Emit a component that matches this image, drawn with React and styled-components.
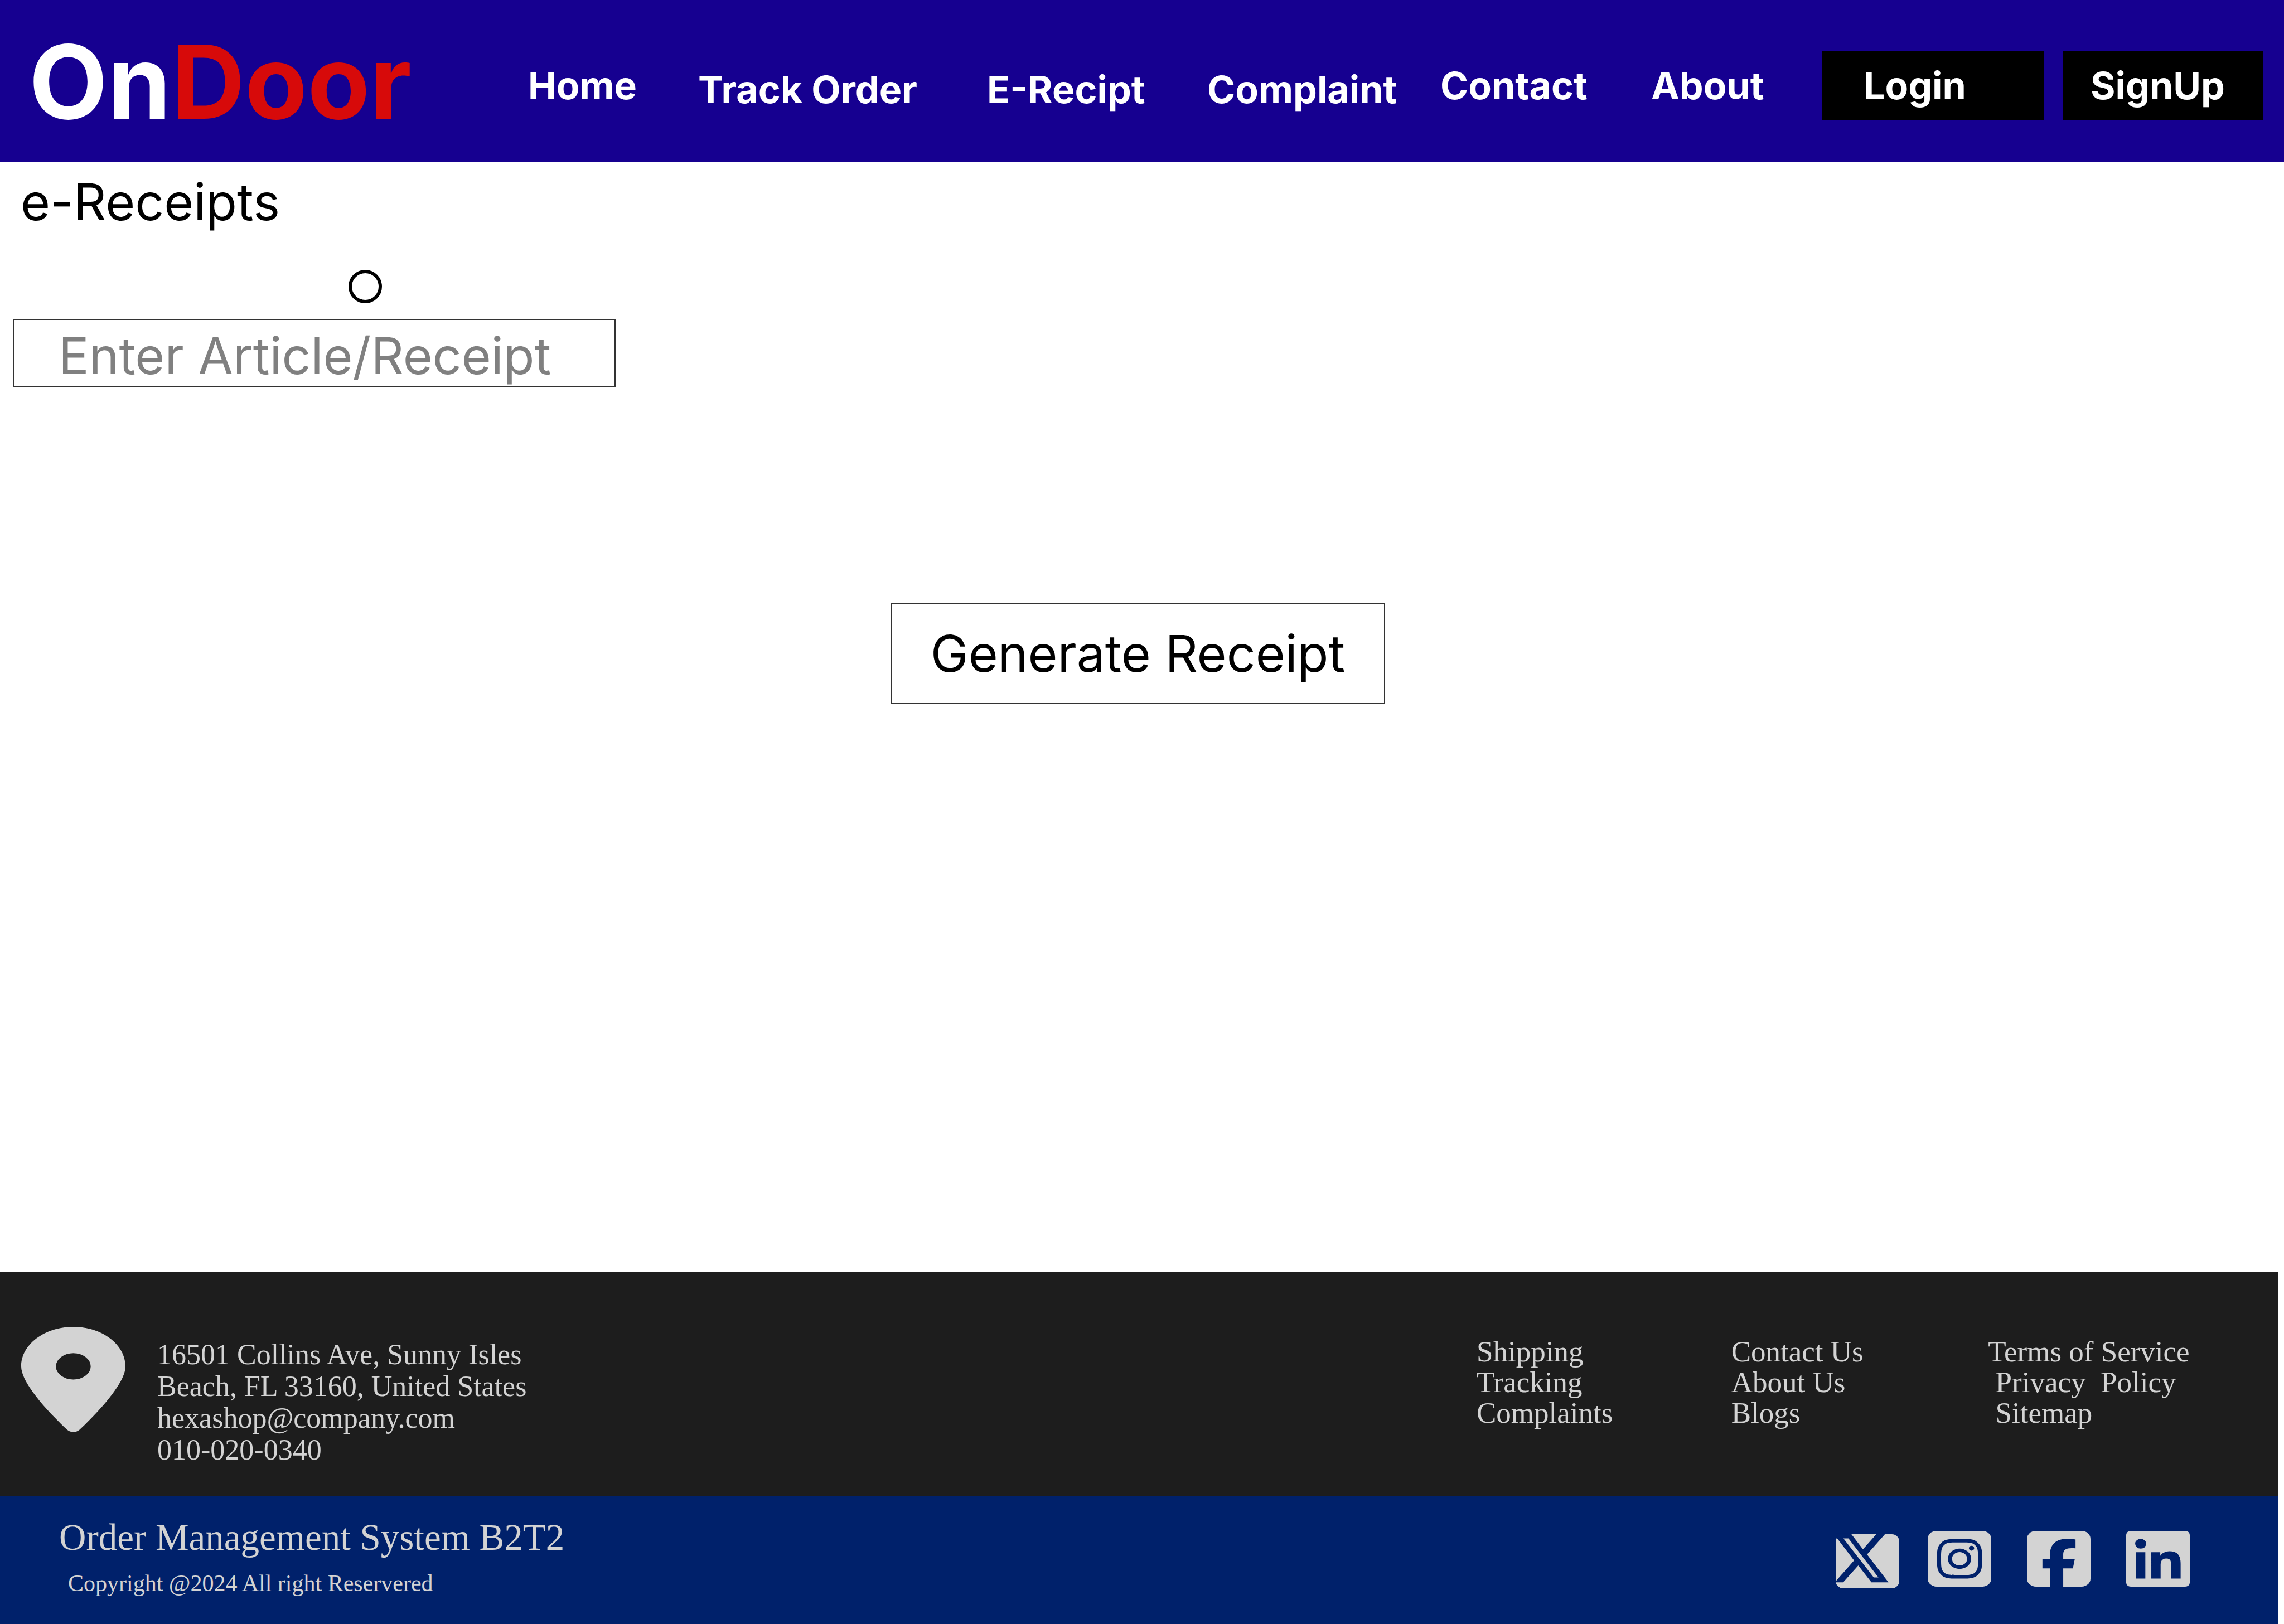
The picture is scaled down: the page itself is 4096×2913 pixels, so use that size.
import React from "react";
import styled, { createGlobalStyle } from "styled-components";

const color = {
  header: "#160090",
  red: "#d70a0a",
  footer: "#1d1d1d",
  bar: "#00216b",
  line: "#4e5468",
  soft: "#d3d3d3",
  outline: "#333",
};

const GlobalStyle = createGlobalStyle`
  *, *::before, *::after { box-sizing: border-box; }
  body { margin: 0; background: #fff; font-family: Inter, "Liberation Sans", sans-serif; }
  h1, p, ul { margin: 0; padding: 0; }
  h1 { font-weight: 400; }
  ul { list-style: none; }
  a { color: inherit; text-decoration: none; }
  button, input { font: inherit; border-radius: 0; }
`;

const Page = styled.div`
  display: flex;
  flex-direction: column;
  min-height: 100vh;
`;

/* Header */

const Header = styled.header`
  display: grid;
  grid-template-columns: 895fr 2321fr 791fr;
  align-items: center;
  min-height: 290px;
  padding: 16px 37px 0 52px;
  background: ${color.header};
  color: #fff;
  font-weight: 700;
  font-size: 68px;
  line-height: 82px;
`;

const Logo = styled.a`
  padding-bottom: 13px;
  font-size: 183px;
  line-height: 221px;
`;

const LogoAccent = styled.span`
  color: ${color.red};
`;

const NavList = styled.ul`
  display: grid;
  grid-template-columns: 305fr 518fr 395fr 418fr 378fr 307fr;
  align-items: center;
  white-space: nowrap;
`;

const NavItem = styled.li`
  padding-top: ${(p) => (p.$low ? "14px" : "0")};
`;

const Actions = styled.div`
  display: grid;
  grid-template-columns: 398fr 359fr;
  gap: 34px;
`;

const ActionButton = styled.button`
  padding: 21px 0 21px ${(p) => p.$inset}px;
  border: 0;
  background: #000;
  color: #fff;
  text-align: left;
`;

/* Receipt form */

const Main = styled.main`
  flex: 1;
  margin-right: 10px;
  padding-top: 17px;
  font-size: 91px;
  line-height: 110px;
  color: #000;
`;

const Title = styled.h1`
  padding-left: 37px;
  font-size: inherit;
`;

const ReceiptForm = styled.form`
  display: flex;
  flex-direction: column;
  align-items: flex-start;
  padding: 67px 0 0 23px;
`;

const RadioRow = styled.label`
  display: flex;
  padding: 0 0 28px 602px;
`;

const Radio = styled.input`
  appearance: none;
  width: 60px;
  height: 60px;
  margin: 0;
  border: 6px solid #000;
  border-radius: 50%;

  &:checked {
    background: radial-gradient(#000 45%, transparent 50%);
  }
`;

const ReceiptInput = styled.input`
  width: 1081px;
  max-width: 100%;
  height: 122px;
  padding: 10px 0 0 80px;
  border: 2px solid ${color.outline};
  background: #fff;
  color: #000;

  &::placeholder {
    color: #808080;
    opacity: 1;
  }
`;

const GenerateButton = styled.button`
  align-self: center;
  width: 886px;
  height: 182px;
  margin: 387px 28px 0 0;
  padding: 0;
  border: 2px solid ${color.outline};
  background: #fff;
  color: #000;
`;

/* Footer */

const Footer = styled.footer`
  margin-right: 10px;
  color: ${color.soft};
  font-family: "Liberation Serif", "Times New Roman", serif;
`;

const FooterInfo = styled.div`
  display: flex;
  align-items: flex-start;
  padding: 98px 0 54px 38px;
  border-bottom: 1px solid ${color.line};
  background: ${color.footer};
`;

const Pin = styled.svg`
  display: block;
  flex: none;
  width: 187px;
  height: 189px;
`;

const Address = styled.address`
  flex: 1;
  padding: 21px 0 0 57px;
  font-style: normal;
  font-size: 52px;
  line-height: 57px;
`;

const FooterLinks = styled.nav`
  display: grid;
  grid-template-columns: 457fr 461fr 521fr;
  width: 1438px;
  padding-top: 17px;
  font-size: 53px;
  line-height: 55px;
  white-space: pre;
`;

const FooterLink = styled.a`
  display: block;
`;

const FooterBar = styled.div`
  display: flex;
  align-items: flex-start;
  justify-content: space-between;
  padding: 37px 159px 50px 106px;
  background: ${color.bar};
`;

const SystemName = styled.p`
  font-size: 67px;
  line-height: 73px;
`;

const Copyright = styled.p`
  padding: 23px 0 0 16px;
  font-size: 42px;
  line-height: 46px;
`;

const Social = styled.div`
  display: flex;
  gap: ${(p) => p.$gap}px;
`;

const SocialArea = styled(Social)`
  padding-top: 25px;
`;

const SocialIcon = styled.svg`
  display: block;
  width: 114px;
  height: ${(p) => p.$height || 100}px;
`;

const navLinks = [
  { label: "Home" },
  { label: "Track Order", low: true },
  { label: "E-Recipt", low: true },
  { label: "Complaint", low: true },
  { label: "Contact" },
  { label: "About" },
];

const footerColumns = [
  ["Shipping", "Tracking", "Complaints"],
  ["Contact Us", "About Us", "Blogs"],
  ["Terms of Service", " Privacy  Policy", " Sitemap"],
];

function XIcon() {
  return (
    <SocialIcon $height={103} viewBox="66 34 501 451" preserveAspectRatio="none" aria-hidden="true">
      <rect x="66" y="60" width="501" height="425" rx="58" fill={color.soft} />
      <path
        fill={color.bar}
        d="M60 54H186L190 60L281 178L386 60V54H460L454 60L313 219L482 438H348L244 306L125 438H60L68 428L211 266L78 93H60Z"
      />
      <path fill={color.soft} d="M127 93H167L403 400H366Z" />
    </SocialIcon>
  );
}

function InstagramIcon() {
  return (
    <SocialIcon viewBox="31 34 361 438" preserveAspectRatio="none" aria-hidden="true">
      <rect x="31" y="34" width="361" height="438" rx="51" ry="62" fill={color.soft} />
      <path
        fill={color.bar}
        d="M212 97C280 97 296 97 316 128C340 158 340 190 340 253S340 348 316 379C296 409 270 409 212 409S128 409 108 379C84 348 84 316 84 253S84 158 108 128C128 97 154 97 212 97Z"
      />
      <path
        fill={color.soft}
        d="M212 125C262 125 282 124 297 142C317 164 317 190 317 253S317 342 297 364C282 382 262 381 212 381S142 382 127 364C107 342 107 316 107 253S107 164 127 142C142 124 162 125 212 125Z"
      />
      <ellipse cx="212" cy="253" rx="66" ry="80" fill={color.bar} />
      <ellipse cx="212" cy="253" rx="43" ry="53" fill={color.soft} />
      <ellipse cx="280" cy="170" rx="15" ry="19" fill={color.bar} />
    </SocialIcon>
  );
}

function FacebookIcon() {
  return (
    <SocialIcon viewBox="599 34 361 438" preserveAspectRatio="none" aria-hidden="true">
      <rect x="599" y="34" width="361" height="438" rx="51" ry="62" fill={color.soft} />
      <path
        fill={color.bar}
        d="M730 472V329H687V253H730V220C730 138 765 96 828 96C845 96 865 98 875 102V171C868 170 860 170 852 170C820 170 805 184 805 218V253H871L860 329H805V472Z"
      />
    </SocialIcon>
  );
}

function LinkedInIcon() {
  return (
    <SocialIcon viewBox="1167 34 362 438" preserveAspectRatio="none" aria-hidden="true">
      <rect x="1167" y="34" width="362" height="438" rx="26" ry="31" fill={color.soft} />
      <ellipse cx="1249.5" cy="134.5" rx="31.5" ry="38.5" fill={color.bar} />
      <path
        fill={color.bar}
        d="M1223 201H1276V409H1223ZM1310 201H1361V230C1371 210 1388 194 1414 194C1466 194 1477 238 1477 294V409H1423V308C1423 278 1423 251 1395 251C1367 251 1363 280 1363 306V409H1310Z"
      />
    </SocialIcon>
  );
}

export default function App() {
  return (
    <Page>
      <GlobalStyle />
      <Header>
        <Logo href="#home">
          On<LogoAccent>Door</LogoAccent>
        </Logo>
        <nav aria-label="Main">
          <NavList>
            {navLinks.map(({ label, low }) => (
              <NavItem key={label} $low={low}>
                <a href="#page">{label}</a>
              </NavItem>
            ))}
          </NavList>
        </nav>
        <Actions>
          <ActionButton type="button" $inset={74}>Login</ActionButton>
          <ActionButton type="button" $inset={49}>SignUp</ActionButton>
        </Actions>
      </Header>

      <Main>
        <Title>e-Receipts</Title>
        <ReceiptForm onSubmit={(e) => e.preventDefault()}>
          <RadioRow>
            <Radio type="radio" name="kind" aria-label="Receipt" />
          </RadioRow>
          <ReceiptInput type="text" placeholder="Enter Article/Receipt" aria-label="Enter Article/Receipt" />
          <GenerateButton type="submit">Generate Receipt</GenerateButton>
        </ReceiptForm>
      </Main>

      <Footer>
        <FooterInfo>
          <Pin viewBox="0 0 384 512" preserveAspectRatio="none" aria-hidden="true">
            <path
              fill={color.soft}
              d="M215.7 499.2C267 435 384 279.4 384 192C384 86 298 0 192 0S0 86 0 192c0 87.4 117 243 168.3 307.2c12.3 15.3 35.1 15.3 47.4 0zM192 128a64 64 0 1 1 0 128 64 64 0 1 1 0-128z"
            />
          </Pin>
          <Address>
            16501 Collins Ave, Sunny Isles
            <br />
            Beach, FL 33160, United States
            <br />
            <a href="mailto:hexashop@company.com">hexashop@company.com</a>
            <br />
            <a href="tel:0100200340">010-020-0340</a>
          </Address>
          <FooterLinks aria-label="Footer">
            {footerColumns.map((links) => (
              <ul key={links[0]}>
                {links.map((label) => (
                  <li key={label}>
                    <FooterLink href="#page">{label}</FooterLink>
                  </li>
                ))}
              </ul>
            ))}
          </FooterLinks>
        </FooterInfo>
        <FooterBar>
          <div>
            <SystemName>Order Management System B2T2</SystemName>
            <Copyright>Copyright @2024 All right Reservered</Copyright>
          </div>
          <SocialArea $gap={51}>
            <a href="#x" aria-label="X"><XIcon /></a>
            <Social $gap={64}>
              <a href="#instagram" aria-label="Instagram"><InstagramIcon /></a>
              <a href="#facebook" aria-label="Facebook"><FacebookIcon /></a>
              <a href="#linkedin" aria-label="LinkedIn"><LinkedInIcon /></a>
            </Social>
          </SocialArea>
        </FooterBar>
      </Footer>
    </Page>
  );
}
